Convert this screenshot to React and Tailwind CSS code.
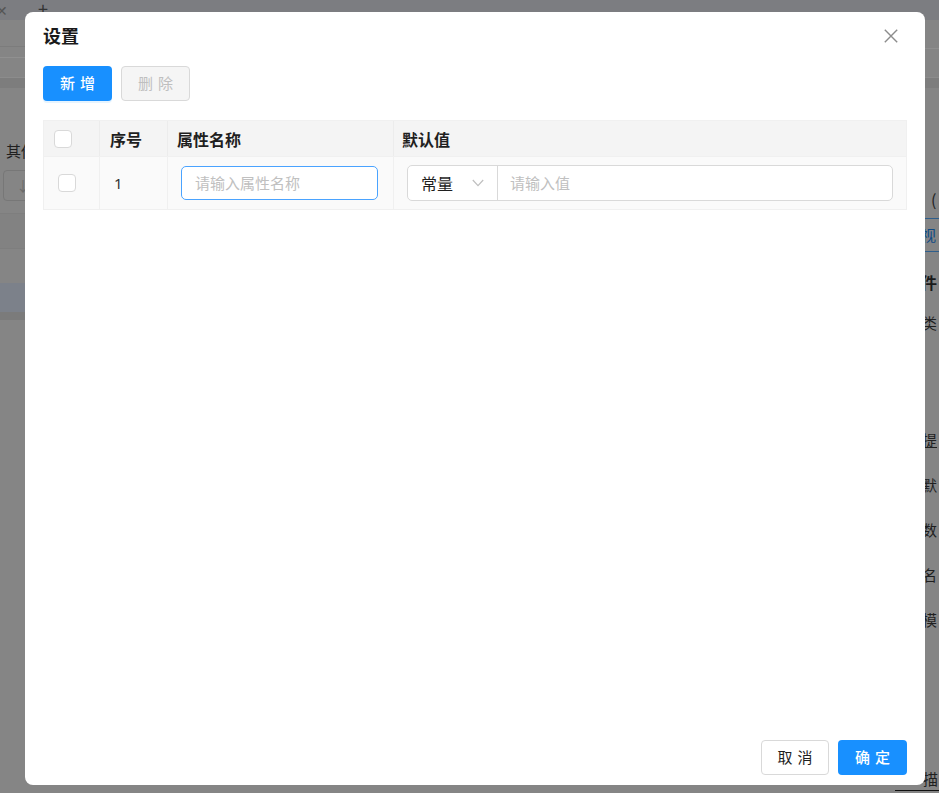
import React from "react";

const F = { fontFamily: '"Noto Sans CJK SC", "Noto Sans", sans-serif' };

function Checkbox() {
  return <div className="w-[18px] h-[18px] rounded-[4px] border border-[#d9d9d9] bg-white" />;
}

function SideText({ children, under }) {
  return (
    <div className="h-[24px] pl-[27px] text-[15px] leading-[24px] text-[#1f1f1f]">
      <span className={under ? "underline" : ""}>{children}</span>
    </div>
  );
}

function Background() {
  return (
    <div className="flex flex-col w-full h-[793px] bg-[#858585] overflow-hidden">
      <div className="h-[20px] bg-[#7c7d81] flex items-start shrink-0">
        <span className="text-[#555] text-[14px] leading-[20px] -ml-[4px]">✕</span>
        <span className="text-[#333] text-[18px] leading-[16px] ml-[30px]">+</span>
      </div>
      <div className="flex flex-1">
        {/* left panel */}
        <div className="w-[460px] flex flex-col">
          <div className="h-[26px]" />
          <div className="h-[11px] border-t border-[#7c7c7c]" />
          <div className="h-[20px] border-t border-[#909090]" />
          <div className="h-[11px] border-t border-[#8c8c8c] bg-[#7d7d7d]" />
          <div className="h-[52px]" />
          <div className="h-[22px] pl-[6px] text-[15px] leading-[22px] text-[#1f1f1f]">其他设置</div>
          <div className="h-[8px]" />
          <div className="ml-[3px] w-[40px] h-[31px] rounded-[4px] border border-[#777] flex items-center justify-center text-[#6a6a6a] text-[14px]">↓</div>
          <div className="h-[12px]" />
          <div className="h-[35px] border-t border-[#7e7e7e] bg-[#828282]" />
          <div className="h-[35px] border-t border-[#7e7e7e]" />
          <div className="h-[29px] bg-[#7c818a]" />
          <div className="h-[8px] bg-[#7b7b7b]" />
        </div>
        <div className="flex-1" />
        {/* right panel */}
        <div className="w-[44px] flex flex-col whitespace-nowrap">
          <div className="h-[28px]" />
          <div className="h-[29px] border-t border-[#8f8f8f]" />
          <div className="h-[11px] border-t border-[#8c8c8c] bg-[#7d7d7d]" />
          <div className="h-[92px]" />
          <div className="h-[38px] pl-[36px] text-[16px] leading-[38px] text-[#1f1f1f]">(</div>
          <div className="h-[34px] border-t border-b border-[#2f5f8c] pl-[26px] text-[15px] leading-[32px] text-[#0e4a85]">视</div>
          <div className="h-[18px]" />
          <div className="h-[24px] pl-[26px] text-[16px] font-bold leading-[24px] text-[#1a1a1a]">件</div>
          <div className="h-[17px]" />
          <SideText>类</SideText>
          <div className="h-[93px]" />
          <SideText under>提</SideText>
          <div className="h-[21px]" />
          <SideText>默</SideText>
          <div className="h-[21px]" />
          <SideText>数</SideText>
          <div className="h-[21px]" />
          <SideText>名</SideText>
          <div className="h-[21px]" />
          <SideText>模</SideText>
          <div className="h-[135px]" />
          <div className="h-[24px] pl-[28px] text-[15px] leading-[24px] text-[#1f1f1f] border-b border-[#111]">描</div>
        </div>
      </div>
    </div>
  );
}

export default function App() {
  return (
    <div className="relative w-full h-[793px] overflow-hidden" style={F}>
      <Background />
      <div className="absolute left-[25px] top-[12px] w-[900px] h-[773px] bg-white rounded-[8px] flex flex-col px-[18px]">
        <div className="pt-[11px] h-[35px] flex items-center">
          <div className="text-[18px] font-bold leading-[24px] text-[#1a1a1a]">设置</div>
        </div>
        <svg className="absolute right-[27px] top-[17px]" width="14" height="14" viewBox="0 0 14 14">
          <path d="M0.8 0.8 L13.2 13.2 M13.2 0.8 L0.8 13.2" stroke="#8c8c8c" strokeWidth="1.4" />
        </svg>
        <div className="mt-[19px] flex gap-[9px]">
          <button className="w-[69px] h-[35px] rounded-[4px] bg-[#1890ff] text-white text-[15px] font-medium flex items-center justify-center gap-[5px] shadow-[0_2px_0_rgba(5,145,255,0.1)]">
            <span>新</span><span>增</span>
          </button>
          <button className="w-[69px] h-[35px] rounded-[4px] bg-[#f5f5f5] border border-[#d9d9d9] text-[#bfbfbf] text-[15px] flex items-center justify-center gap-[5px]">
            <span>删</span><span>除</span>
          </button>
        </div>
        <div className="mt-[19px] border border-[#f0f0f0]">
          <div className="flex h-[36px] bg-[#f4f4f4] border-b border-[#f0f0f0] text-[16px] font-bold text-[#1f1f1f]">
            <div className="w-[56px] border-r border-[#ececec] flex items-center pl-[10px]"><Checkbox /></div>
            <div className="w-[68px] border-r border-[#ececec] flex items-center pl-[10px]">序号</div>
            <div className="w-[226px] border-r border-[#ececec] flex items-center pl-[9px]">属性名称</div>
            <div className="flex-1 flex items-center pl-[8px]">默认值</div>
          </div>
          <div className="flex h-[52px] bg-[#fafafa] text-[15px]">
            <div className="w-[56px] border-r border-[#f0f0f0] flex items-center pl-[14px]"><Checkbox /></div>
            <div className="w-[68px] border-r border-[#f0f0f0] flex items-center pl-[14px] text-[#333]" style={{ fontFamily: '"Noto Sans", sans-serif' }}>1</div>
            <div className="w-[226px] border-r border-[#f0f0f0] flex items-center px-[13px]">
              <div className="w-[197px] h-[34px] rounded-[5px] border border-[#4aa3ff] bg-white flex items-center pl-[13px] text-[15px] text-[#c0c0c0]">请输入属性名称</div>
            </div>
            <div className="flex-1 flex items-center pl-[13px] pr-[13px]">
              <div className="flex-1 h-[36px] rounded-[5px] border border-[#d9d9d9] bg-white flex">
                <div className="w-[90px] border-r border-[#d9d9d9] flex items-center pl-[13px] pr-[13px] justify-between">
                  <span className="text-[16px] text-[#1f1f1f]">常量</span>
                  <svg width="12" height="8" viewBox="0 0 12 8">
                    <path d="M0.8 1 L6 6.6 L11.2 1" stroke="#bfbfbf" strokeWidth="1.2" fill="none" />
                  </svg>
                </div>
                <div className="flex items-center pl-[12px] text-[15px] text-[#c0c0c0]">请输入值</div>
              </div>
            </div>
          </div>
        </div>
        <div className="flex-1" />
        <div className="flex justify-end gap-[9px] pb-[10px]">
          <button className="w-[68px] h-[35px] rounded-[4px] border border-[#d9d9d9] bg-white text-[#1f1f1f] text-[15px] flex items-center justify-center gap-[5px]">
            <span>取</span><span>消</span>
          </button>
          <button className="w-[69px] h-[35px] rounded-[4px] bg-[#1890ff] text-white text-[15px] font-medium flex items-center justify-center gap-[5px]">
            <span>确</span><span>定</span>
          </button>
        </div>
      </div>
    </div>
  );
}
